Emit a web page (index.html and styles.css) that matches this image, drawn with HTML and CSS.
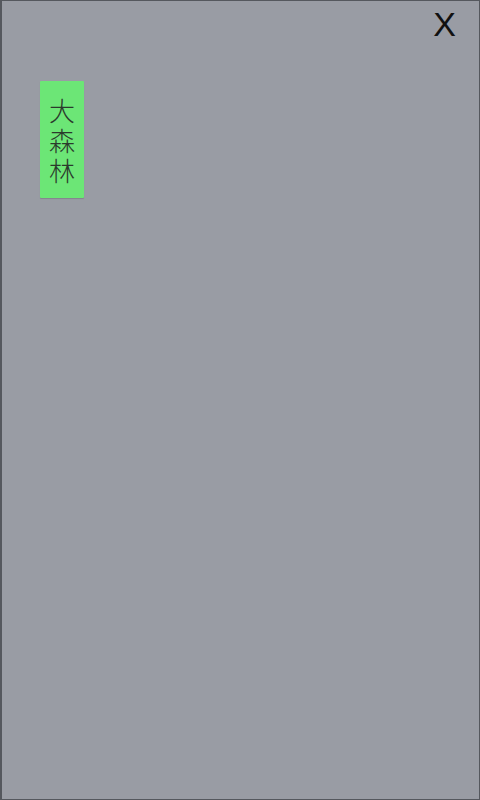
FILE: index.html
```html
<!DOCTYPE html>
<html>
<head>
<meta charset="utf-8">
<link rel="stylesheet" href="styles.css">
</head>
<body>
<div class="frame">
  <div class="topbar"><span class="close">X</span></div>
  <div class="tag">大森林</div>
</div>
</body>
</html>
```
FILE: styles.css
```css
html, body { margin: 0; padding: 0; }
body { width: 480px; height: 800px; overflow: hidden; }
.frame {
  box-sizing: border-box;
  width: 480px;
  height: 800px;
  background: #999ca4;
  border-style: solid;
  border-color: #55585e;
  border-width: 1px 1px 1px 2px;
  display: flex;
  flex-direction: column;
  align-items: flex-start;
}
.topbar {
  align-self: stretch;
  display: flex;
  justify-content: flex-end;
  height: 80px;
  padding-right: 23px;
  box-sizing: border-box;
}
.close {
  font-family: "Liberation Sans", Arial, sans-serif;
  font-size: 34px;
  line-height: 47px;
  color: #111;
}
.tag {
  margin-left: 38px;
  width: 44px;
  height: 117px;
  box-sizing: border-box;
  background: #6ce676;
  border-radius: 1px;
  box-shadow: 0 1px 1px rgba(0,0,0,0.15);
  padding: 14px 0 0 0;
  font-family: "Noto Sans CJK SC", sans-serif;
  font-weight: 300;
  font-size: 26px;
  line-height: 30px;
  color: #2b3a2c;
  text-align: center;
  word-break: break-all;
}
```
